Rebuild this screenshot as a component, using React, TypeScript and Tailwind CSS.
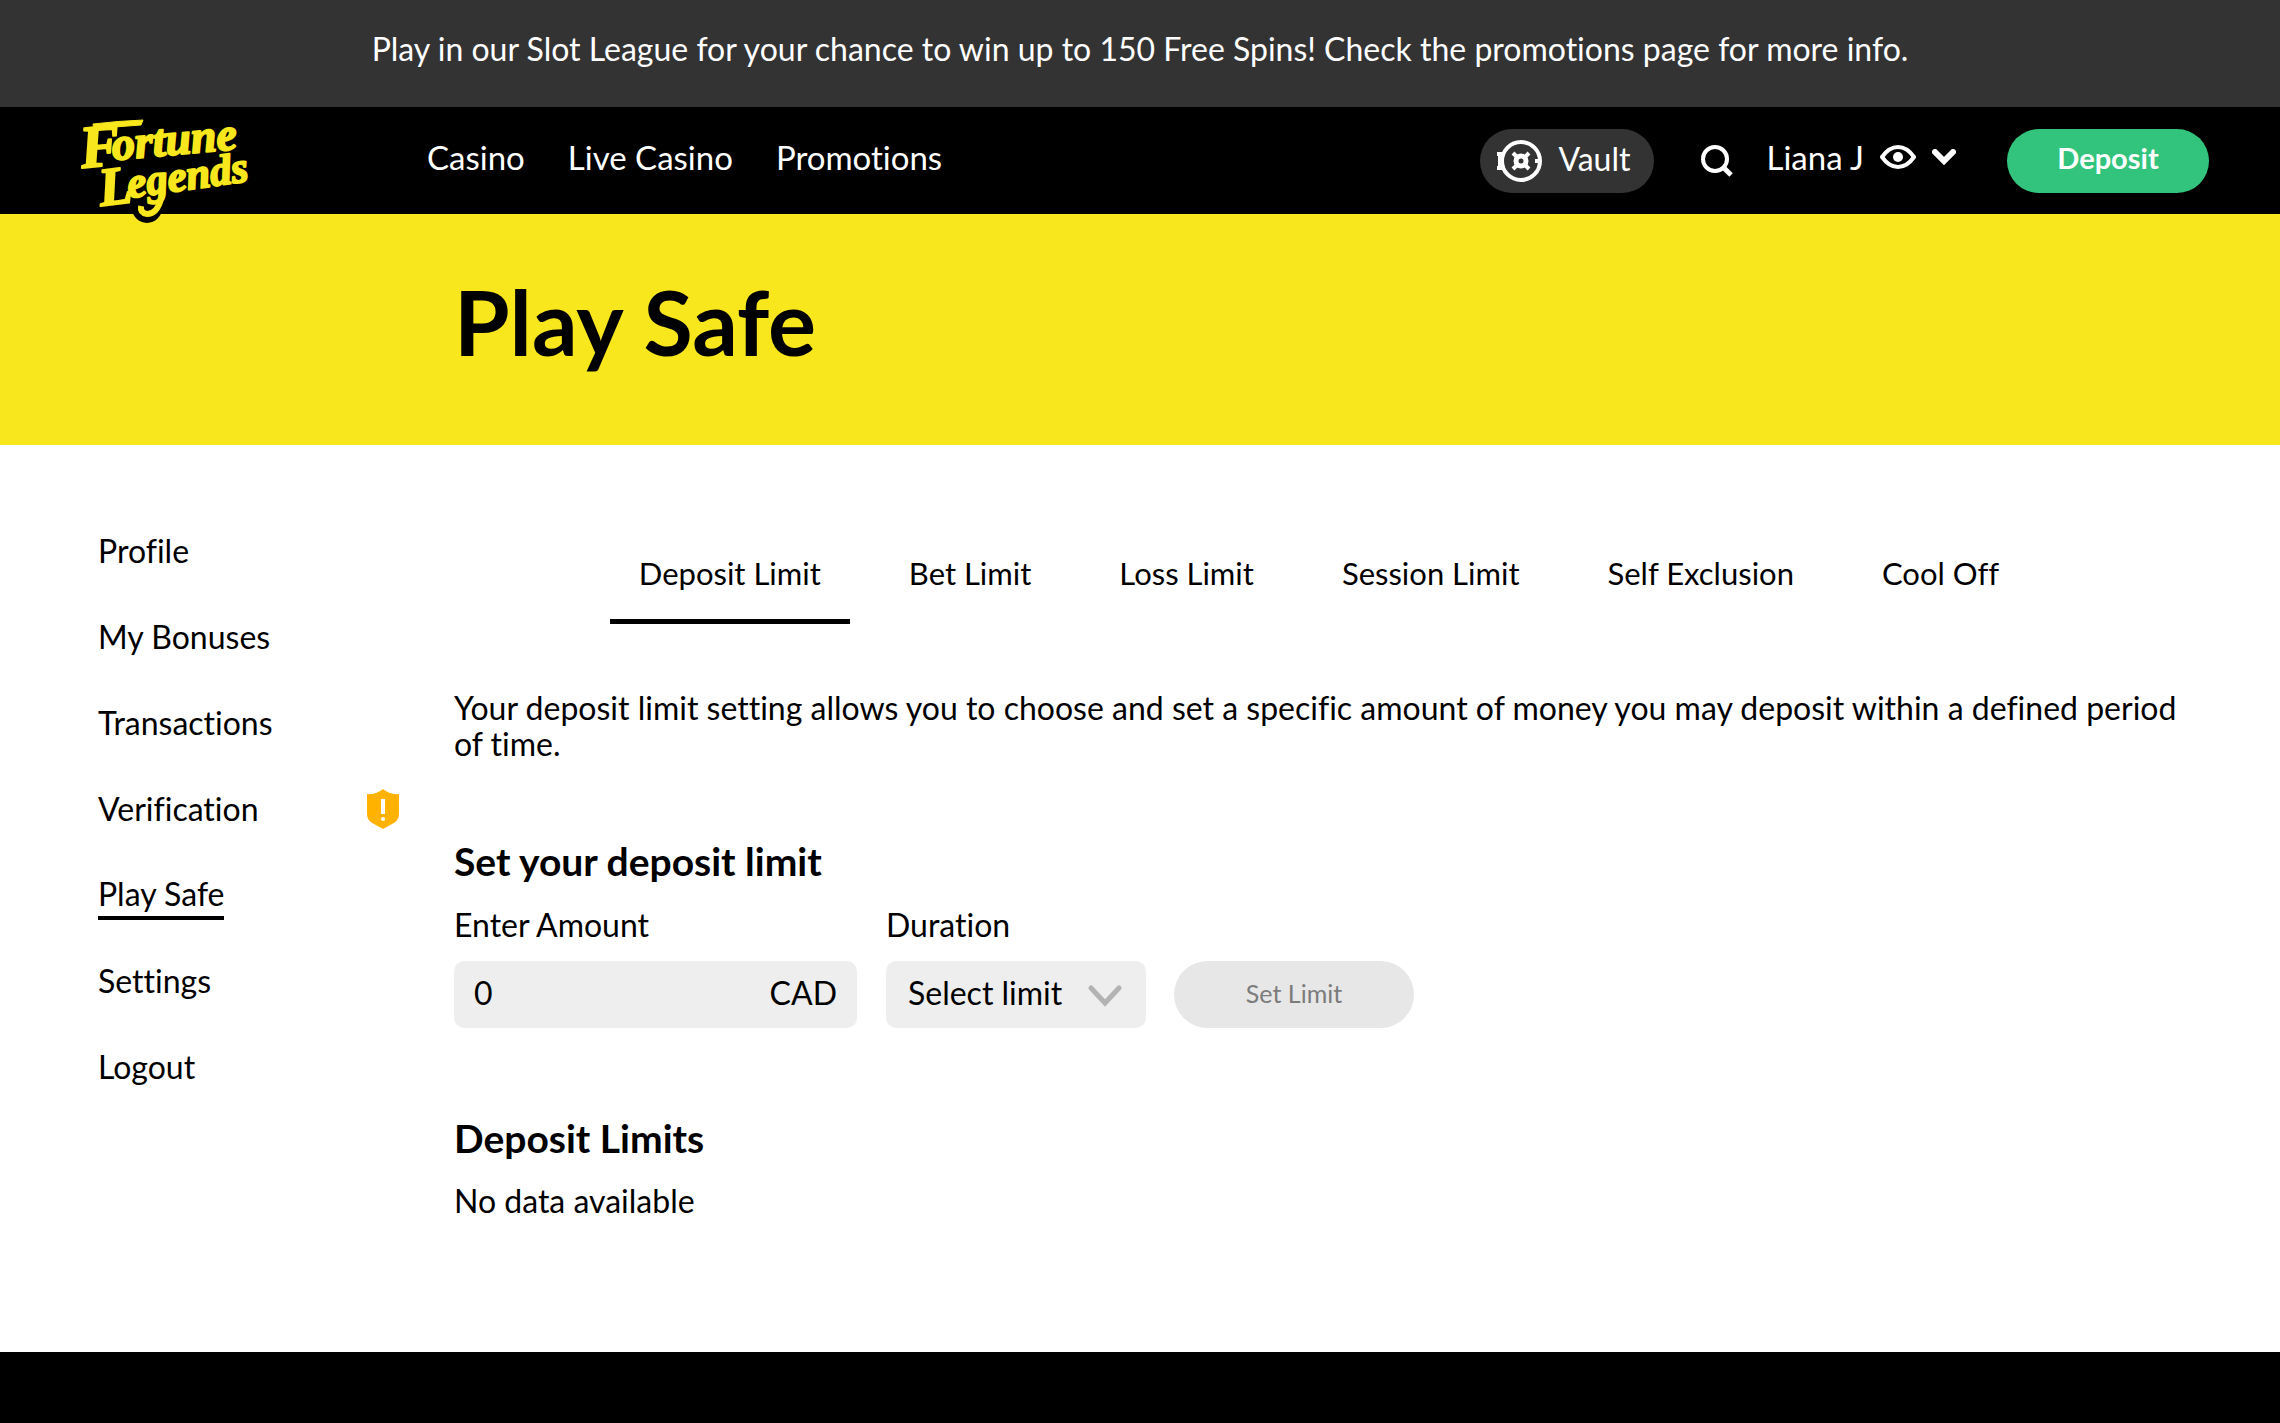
import { useState } from 'react';

// ── Data ──

const NAV_LINKS = ['Casino', 'Live Casino', 'Promotions'];

const MENU_ITEMS = [
  { label: 'Profile' },
  { label: 'My Bonuses' },
  { label: 'Transactions' },
  { label: 'Verification', warning: true },
  { label: 'Play Safe', active: true },
  { label: 'Settings' },
  { label: 'Logout' },
];

const TABS = ['Deposit Limit', 'Bet Limit', 'Loss Limit', 'Session Limit', 'Self Exclusion', 'Cool Off'];

// ── Icons ──

function Logo() {
  return (
    <svg viewBox="0 0 180 124" className="relative z-10 h-31 w-45" role="img" aria-label="Fortune Legends">
      {/* black tab that the bottom swash hangs into */}
      <circle cx="71" cy="101" r="15" fill="#000" />
      <g
        fill="#f8e71c"
        stroke="#f8e71c"
        strokeWidth="2"
        strokeLinejoin="round"
        fontFamily="'Liberation Serif', serif"
        fontWeight="700"
        fontStyle="italic"
      >
        <text x="6" y="61" fontSize="60" transform="rotate(-6 6 61)">F</text>
        <text x="37" y="53" fontSize="46" transform="rotate(-5 37 53)">ortune</text>
        <text x="25" y="99" fontSize="54" transform="rotate(-7 25 99)">L</text>
        <text x="53" y="91" fontSize="43" transform="rotate(-8 53 91)">egends</text>
        {/* swashes */}
        <path d="M17 17Q42 14 67 13L65 18Q42 19 18 23Z" strokeWidth="1" />
        <path d="M85 92Q81 107 71 107Q64 106 65 99" fill="none" strokeWidth="6" />
      </g>
    </svg>
  );
}

function VaultIcon() {
  return (
    <svg viewBox="0 0 46 44" className="h-11 w-[46px]" fill="none" stroke="currentColor" aria-hidden="true">
      <circle cx="25" cy="22" r="19" strokeWidth="4" />
      <path d="M1 15h6M1 29h6M4 13v18" strokeWidth="4" />
      <circle cx="25" cy="22" r="5" strokeWidth="5" />
      <path d="M17 14l4 4M33 14l-4 4M17 30l4-4M33 30l-4-4M39 22h4" strokeWidth="4" />
    </svg>
  );
}

function SearchIcon() {
  return (
    <svg viewBox="0 0 34 34" className="size-[34px]" fill="none" stroke="currentColor" aria-hidden="true">
      <circle cx="15" cy="15" r="12" strokeWidth="4" />
      <path d="M23 23l8 8" strokeWidth="5" />
    </svg>
  );
}

function EyeIcon() {
  return (
    <svg viewBox="0 0 36 24" className="h-6 w-9" fill="none" stroke="currentColor" aria-hidden="true">
      <path d="M2 12Q9 2 18 2t16 10Q27 22 18 22T2 12Z" strokeWidth="4" strokeLinejoin="round" />
      <circle cx="18" cy="12" r="5" fill="currentColor" stroke="none" />
    </svg>
  );
}

function ShieldIcon() {
  return (
    <svg viewBox="0 0 32 40" className="h-10 w-8" role="img" aria-label="Action needed">
      <path d="M16 0q-7 6-16 5v20q0 7 7 10l9 5 9-5q7-3 7-10V5q-9 1-16-5Z" fill="#ffb300" />
      <path d="M14 10h4v15h-4Z" fill="#fff" />
      <circle cx="16" cy="30" r="2" fill="#fff" />
    </svg>
  );
}

// ── Sections ──

function Header() {
  return (
    <header className="flex h-[107px] items-center bg-black pr-[71px] pl-[76px] text-white">
      <a href="#home" className="h-[107px] w-[351px] shrink-0">
        <Logo />
      </a>
      <nav className="flex flex-1 gap-[43px] pb-2 text-[33px]">
        {NAV_LINKS.map((link) => (
          <a key={link} href="#nav">{link}</a>
        ))}
      </nav>
      <div className="flex items-center">
        <button className="mr-[46px] flex h-16 items-center gap-4 rounded-full bg-[#333] pr-6 pl-4">
          <VaultIcon />
          <span className="pb-1">Vault</span>
        </button>
        <button aria-label="Search" className="mr-8">
          <SearchIcon />
        </button>
        <button className="mr-[51px] flex items-center gap-4 pb-2 text-[33px]">
          Liana J
          <EyeIcon />
          <svg viewBox="0 0 24 16" className="h-4 w-6" fill="none" stroke="currentColor" aria-hidden="true">
            <path d="M3 3l9 9 9-9" strokeWidth="6" strokeLinecap="round" />
          </svg>
        </button>
        <button className="h-16 w-[202px] rounded-full bg-[#32c47c] pb-1.5 text-[29px] font-bold">Deposit</button>
      </div>
    </header>
  );
}

function SideMenu() {
  return (
    <aside className="w-[356px] shrink-0 pt-5 pr-[55px]">
      <ul>
        {MENU_ITEMS.map((item) => (
          <li key={item.label} className="mb-[50px] flex h-9 items-center justify-between">
            <a
              href="#menu"
              className={item.active ? 'border-b-4 border-black pt-1.5 pb-1' : ''}
              aria-current={item.active ? 'page' : undefined}
            >
              {item.label}
            </a>
            {item.warning && <ShieldIcon />}
          </li>
        ))}
      </ul>
    </aside>
  );
}

function LimitForm() {
  return (
    <form className="mt-6 flex items-end" onSubmit={(e) => e.preventDefault()}>
      <div>
        <label htmlFor="amount">Enter Amount</label>
        <div className="mt-[18px] flex h-[67px] w-[403px] items-center rounded-[10px] bg-[#eee] px-5 pb-1">
          <input id="amount" type="text" defaultValue="0" className="min-w-0 flex-1 outline-none" />
          <span>CAD</span>
        </div>
      </div>
      <div className="ml-[29px]">
        <label htmlFor="duration">Duration</label>
        <div className="relative mt-[18px] h-[67px]">
          <select id="duration" className="h-full w-[260px] appearance-none rounded-[10px] bg-[#eee] pb-1 pl-[22px]">
            <option>Select limit</option>
            <option>Daily</option>
            <option>Weekly</option>
            <option>Monthly</option>
          </select>
          <svg
            viewBox="0 0 34 22"
            className="pointer-events-none absolute top-6 right-6 h-[22px] w-[34px]"
            fill="none"
            stroke="#b3b3b3"
            aria-hidden="true"
          >
            <path d="M3 3l14 15L31 3" strokeWidth="5" strokeLinecap="round" />
          </svg>
        </div>
      </div>
      <button disabled className="ml-7 h-[67px] w-60 rounded-full bg-[#e7e7e7] pb-1 text-[25px] text-[#7c7c7c]">
        Set Limit
      </button>
    </form>
  );
}

export default function App() {
  const [tab, setTab] = useState(TABS[0]);

  return (
    <div className="flex min-h-screen flex-col bg-white font-[Lato,sans-serif] text-[32px] leading-9 text-black [font-variant-ligatures:none]">
      <div className="h-[107px] bg-[#333] pt-[31px] text-center text-white">
        Play in our Slot League for your chance to win up to 150 Free Spins! Check the promotions page for more info.
      </div>
      <Header />
      <div className="h-[231px] bg-[#f8e71c] pt-[61px] pl-[454px]">
        <h1 className="text-[90px] leading-[92px] font-bold">Play Safe</h1>
      </div>

      <div className="flex min-h-[907px] pt-[68px] pr-24 pl-[98px]">
        <SideMenu />
        <main className="min-w-0 flex-1">
          <div role="tablist" className="flex justify-center gap-[30px] pt-[42px] text-[31px]">
            {TABS.map((name) => (
              <button
                key={name}
                role="tab"
                aria-selected={name === tab}
                onClick={() => setTab(name)}
                className={`border-b-[5px] px-[29px] pb-7 ${name === tab ? 'border-black' : 'border-transparent'}`}
              >
                {name}
              </button>
            ))}
          </div>
          <p className="mt-[66px]">
            Your deposit limit setting allows you to choose and set a specific amount of money you may deposit within a
            defined period of time.
          </p>
          <h2 className="mt-[77px] text-[39px] leading-[44px] font-bold">Set your deposit limit</h2>
          <LimitForm />
          <h2 className="mt-[88px] text-[39px] leading-[44px] font-bold">Deposit Limits</h2>
          <p className="mt-[23px]">No data available</p>
        </main>
      </div>
      <footer className="min-h-[71px] flex-1 bg-black" />
    </div>
  );
}
